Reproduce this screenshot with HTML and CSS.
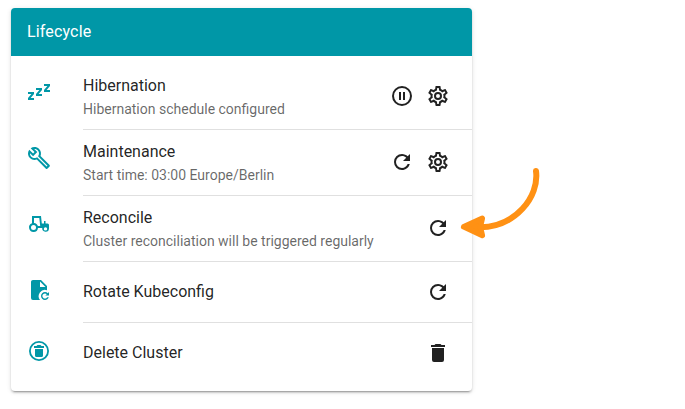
FILE: index.html
```html
<!DOCTYPE html>
<html lang="en">
<head>
<meta charset="utf-8">
<title>Lifecycle</title>
<link rel="stylesheet" href="styles.css">
</head>
<body>
<svg class="defs" width="0" height="0">
  <symbol id="refresh" viewBox="0 0 24 24"><path d="M17.65,6.35C16.2,4.9 14.21,4 12,4A8,8 0 0,0 4,12A8,8 0 0,0 12,20C15.73,20 18.84,17.45 19.73,14H17.65C16.83,16.33 14.61,18 12,18A6,6 0 0,1 6,12A6,6 0 0,1 12,6C13.66,6 15.14,6.69 16.22,7.78L13,11H20V4L17.65,6.35Z"/></symbol>
  <symbol id="cog" viewBox="0 0 24 24"><path d="M12,8A4,4 0 0,1 16,12A4,4 0 0,1 12,16A4,4 0 0,1 8,12A4,4 0 0,1 12,8M12,10A2,2 0 0,0 10,12A2,2 0 0,0 12,14A2,2 0 0,0 14,12A2,2 0 0,0 12,10M10,22C9.75,22 9.54,21.82 9.5,21.58L9.13,18.93C8.5,18.68 7.96,18.34 7.44,17.94L4.95,18.95C4.73,19.03 4.46,18.95 4.34,18.73L2.34,15.27C2.21,15.05 2.27,14.78 2.46,14.63L4.57,12.97L4.5,12L4.57,11L2.46,9.37C2.27,9.22 2.21,8.95 2.34,8.73L4.34,5.27C4.46,5.05 4.73,4.96 4.95,5.05L7.44,6.05C7.96,5.66 8.5,5.32 9.13,5.07L9.5,2.42C9.54,2.18 9.75,2 10,2H14C14.25,2 14.46,2.18 14.5,2.42L14.87,5.07C15.5,5.32 16.04,5.66 16.56,6.05L19.05,5.05C19.27,4.96 19.54,5.05 19.66,5.27L21.66,8.73C21.79,8.95 21.73,9.22 21.54,9.37L19.43,11L19.5,12L19.43,13L21.54,14.63C21.73,14.78 21.79,15.05 21.66,15.27L19.66,18.73C19.54,18.95 19.27,19.04 19.05,18.95L16.56,17.95C16.04,18.34 15.5,18.68 14.87,18.93L14.5,21.58C14.46,21.82 14.25,22 14,22H10M11.25,4L10.88,6.61C9.68,6.86 8.62,7.5 7.85,8.39L5.44,7.35L4.69,8.65L6.8,10.2C6.4,11.37 6.4,12.64 6.8,13.8L4.68,15.36L5.43,16.66L7.86,15.62C8.63,16.5 9.68,17.14 10.87,17.38L11.24,20H12.76L13.13,17.39C14.32,17.14 15.37,16.5 16.14,15.62L18.57,16.66L19.32,15.36L17.2,13.81C17.6,12.64 17.6,11.37 17.2,10.2L19.31,8.65L18.56,7.35L16.15,8.39C15.38,7.5 14.32,6.86 13.12,6.62L12.75,4H11.25Z"/></symbol>
</svg>
<section class="card">
  <header class="card-header">Lifecycle</header>
  <div class="list">
    <div class="row">
      <svg class="icon lead" viewBox="0 0 24 24"><path d="M23,12H17V10L20.39,6H17V4H23V6L19.62,10H23V12M15,16H9V14L12.39,10H9V8H15V10L11.62,14H15V16M7,20H1V18L4.39,14H1V12H7V14L3.62,18H7V20Z"/></svg>
      <div class="content">
        <div class="text"><div class="title">Hibernation</div><div class="subtitle">Hibernation schedule configured</div></div>
        <div class="actions">
          <svg class="icon" viewBox="0 0 24 24"><path d="M13,16V8H15V16H13M9,16V8H11V16H9M12,2A10,10 0 0,1 22,12A10,10 0 0,1 12,22A10,10 0 0,1 2,12A10,10 0 0,1 12,2M12,4A8,8 0 0,0 4,12A8,8 0 0,0 12,20A8,8 0 0,0 20,12A8,8 0 0,0 12,4Z"/></svg>
          <svg class="icon"><use href="#cog"/></svg>
        </div>
      </div>
    </div>
    <div class="row">
      <svg class="icon lead" viewBox="0 0 24 24"><path d="M22.61,19L13.53,9.91C14.46,7.57 14,4.81 12.09,2.91C9.79,0.61 6.21,0.4 3.66,2.26L7.5,6.11L6.08,7.52L2.25,3.69C0.39,6.23 0.6,9.82 2.9,12.11C4.76,13.97 7.47,14.46 9.79,13.59L18.9,22.7C19.29,23.09 19.92,23.09 20.31,22.7L22.61,20.4C23,20 23,19.39 22.61,19M19.61,20.59L10.15,11.13C9.54,11.58 8.86,11.85 8.15,11.95C6.79,12.15 5.36,11.74 4.32,10.7C3.37,9.76 2.93,8.5 3,7.26L6.09,10.35L10.33,6.11L7.24,3C8.48,2.96 9.73,3.39 10.68,4.33C11.76,5.41 12.17,6.9 11.92,8.29C11.8,9 11.5,9.66 11.04,10.25L20.5,19.7L19.61,20.59Z"/></svg>
      <div class="content">
        <div class="text"><div class="title">Maintenance</div><div class="subtitle">Start time: 03:00 Europe/Berlin</div></div>
        <div class="actions">
          <svg class="icon"><use href="#refresh"/></svg>
          <svg class="icon"><use href="#cog"/></svg>
        </div>
      </div>
    </div>
    <div class="row">
      <svg class="icon lead" viewBox="0 0 24 24"><path fill-rule="evenodd" d="M5,4H14L14.8,11.5H17V9H18.5V11.5H20.5C21.4,11.6 22,12.2 22,13V16.5A3,3 0 1,1 15.2,16H11A4.5,4.5 0 1,1 5,11.2V4M7,6V11C9,11.2 10.5,12.4 10.9,14H13.2L12.3,6H7M6.5,13A2.5,2.5 0 1,0 6.5,18A2.5,2.5 0 1,0 6.5,13M18.5,15.2A1.7,1.7 0 1,0 18.5,18.6A1.7,1.7 0 1,0 18.5,15.2Z"/></svg>
      <div class="content">
        <div class="text"><div class="title">Reconcile</div><div class="subtitle">Cluster reconciliation will be triggered regularly</div></div>
        <div class="actions"><svg class="icon"><use href="#refresh"/></svg></div>
      </div>
    </div>
    <div class="row single">
      <svg class="icon lead" viewBox="0 0 24 24"><path d="M6,2C4.89,2 4,2.9 4,4V20A2,2 0 0,0 6,22H13A6.3,6.3 0 0,1 20,12.2V8L14,2H6M13,3.5L18.5,9H13V3.5Z"/><path d="M18,14C15.8,14 14,15.8 14,18C14,20.2 15.8,22 18,22C19.7,22 21.2,20.9 21.8,19.3H20.1C19.7,20.1 18.9,20.6 18,20.6C16.6,20.6 15.4,19.4 15.4,18C15.4,16.6 16.6,15.4 18,15.4C18.7,15.4 19.3,15.7 19.8,16.2L18.3,17.6H22V14L20.8,15.2C20.1,14.4 19.1,14 18,14Z"/></svg>
      <div class="content">
        <div class="title">Rotate Kubeconfig</div>
        <div class="actions"><svg class="icon"><use href="#refresh"/></svg></div>
      </div>
    </div>
    <div class="row single">
      <svg class="icon lead" viewBox="0 0 24 24"><path fill-rule="evenodd" d="M12,2A10,10 0 1,0 12,22A10,10 0 1,0 12,2M12,3.8A8.2,8.2 0 1,1 12,20.2A8.2,8.2 0 1,1 12,3.8Z"/><path d="M17,7H14.5L13.5,6H10.5L9.5,7H7V9H17V7M8,10V16.5A1.5,1.5 0 0,0 9.5,18H14.5A1.5,1.5 0 0,0 16,16.5V10H8Z"/></svg>
      <div class="content">
        <div class="title">Delete Cluster</div>
        <div class="actions"><svg class="icon" viewBox="0 0 24 24"><path d="M19,4H15.5L14.5,3H9.5L8.5,4H5V6H19M6,19A2,2 0 0,0 8,21H16A2,2 0 0,0 18,19V7H6V19Z"/></svg></div>
      </div>
    </div>
  </div>
</section>
<svg class="arrow" viewBox="0 0 90 80"><path class="shaft" d="M76 11C79.5 37 55 67 20 67.3"/><path class="head" d="M3.7 66.8L22.3 58.3L20.3 67L22.3 75.5Z"/></svg>
</body>
</html>
```

FILE: styles.css
```css
* { box-sizing: border-box; }
body {
  margin: 0;
  min-height: 409px;
  padding: 8px 0 0 11px;
  background: #fff;
  font-family: Roboto, sans-serif;
  color: rgba(0, 0, 0, .87);
}
.defs { position: absolute; }
.card {
  width: 461px;
  border-radius: 4px;
  background: #fff;
  box-shadow: 0 3px 1px -2px rgba(0, 0, 0, .2), 0 2px 2px 0 rgba(0, 0, 0, .14), 0 1px 5px 0 rgba(0, 0, 0, .12);
}
.card-header {
  height: 48px;
  padding: 0 16px;
  border-radius: 4px 4px 0 0;
  background: #0097a7;
  color: #fff;
  font-size: 16px;
  line-height: 47px;
  letter-spacing: .15px;
}
.list { padding: 8px 0; }
.row { display: flex; height: 66px; padding-left: 16px; }
.row.single { height: 61px; }
.row.single:last-child { height: 60px; }
.icon { display: block; width: 24px; height: 24px; fill: currentColor; }
.lead { flex: none; margin: 16px 32px 0 0; color: #0097a7; }
.content {
  display: flex;
  flex: 1;
  align-items: center;
  justify-content: space-between;
  padding-right: 22px;
  border-bottom: 1px solid #e0e0e0;
}
.row:last-child .content { border-bottom: 0; }
.title { font-size: 16px; line-height: 24px; }
.subtitle { color: rgba(0, 0, 0, .6); font-size: 14px; line-height: 20px; margin-top: 1px; }
.actions { display: flex; gap: 12px; }
.row:not(.single) .actions { padding-bottom: 1px; }
.arrow { position: absolute; left: 460px; top: 160px; width: 90px; height: 80px; }
.shaft { fill: none; stroke: #ff9114; stroke-width: 6; stroke-linecap: round; }
.head { fill: #ff9114; stroke: #ff9114; stroke-width: 5.5; stroke-linejoin: round; }
```
